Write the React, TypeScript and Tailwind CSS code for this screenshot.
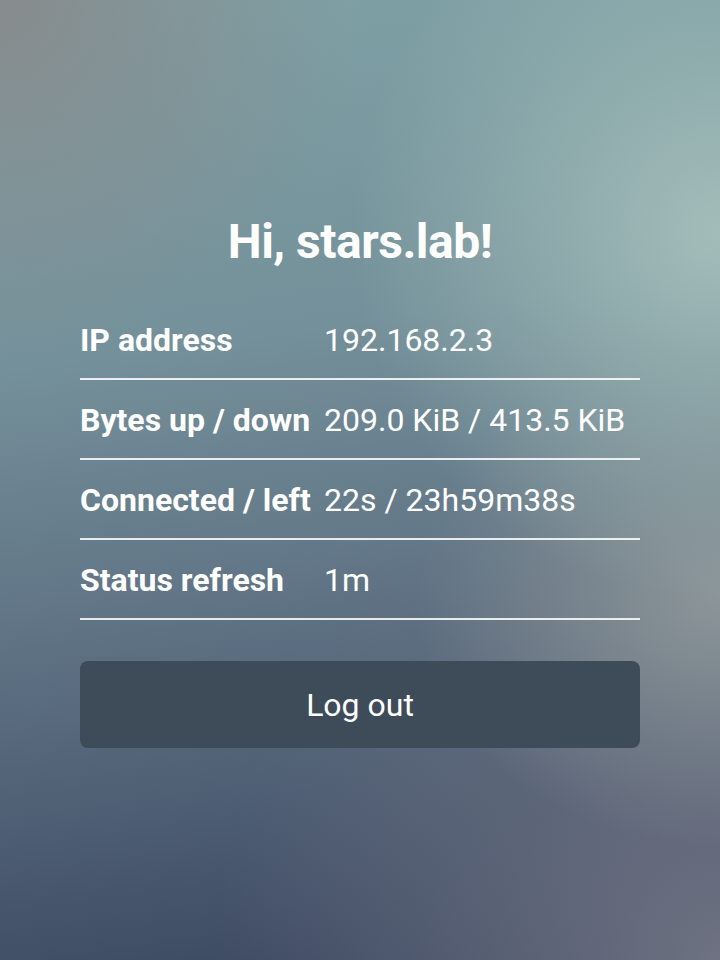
const rows = [
  { label: "IP address", value: "192.168.2.3" },
  { label: "Bytes up / down", value: "209.0 KiB / 413.5 KiB" },
  { label: "Connected / left", value: "22s / 23h59m38s" },
  { label: "Status refresh", value: "1m" },
];

export default function App() {
  return (
    <div className="relative h-[960px] w-full overflow-hidden bg-[radial-gradient(circle_at_100%_24%,#a2bdb9_0%,transparent_36%),radial-gradient(circle_at_0%_0%,#878b8d_0%,transparent_30%),radial-gradient(ellipse_at_100%_62%,#8c9699_0%,transparent_30%),radial-gradient(circle_at_100%_100%,#6e7282_0%,transparent_42%),linear-gradient(172deg,#7fa2a6_0%,#74909a_35%,#5e7183_62%,#38445e_100%)] font-['Roboto',sans-serif] text-white">
      <div className="mx-auto flex w-[560px] flex-col pt-[212px]">
        <h1 className="h-[60px] text-center text-[48px] font-bold leading-[60px] tracking-[-0.5px]">
          Hi, stars.lab!
        </h1>

        <div className="mt-[28px] flex flex-col">
          {rows.map((r) => (
            <div
              key={r.label}
              className="grid h-[80px] grid-cols-[244px_1fr] items-center border-b-2 border-white/85"
            >
              <span className="pt-[2px] text-[32px] font-bold">{r.label}</span>
              <span className="pt-[2px] text-[32px]">{r.value}</span>
            </div>
          ))}
        </div>

        <button className="mt-[41px] h-[87px] w-full rounded-lg bg-[#3e4b59] text-[32px] text-white">
          Log out
        </button>
      </div>
    </div>
  );
}
